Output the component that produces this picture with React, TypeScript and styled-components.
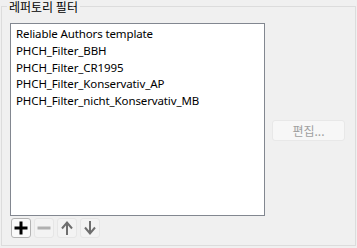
import styled, { createGlobalStyle } from 'styled-components';

const GlobalStyle = createGlobalStyle`
	html, body {
		margin: 0;
		padding: 0;
		background: #f0f0f0;
	}
	body {
		width: 357px;
		height: 248px;
		overflow: hidden;
		font-family: 'Noto Sans', 'Noto Sans CJK KR', sans-serif;
		font-size: 12px;
		color: #000;
	}
`;

const Page = styled.div`
	width: 357px;
	height: 248px;
	padding: 6px 1px 2px 1px;
	box-sizing: border-box;
`;

const GroupBox = styled.fieldset`
	margin: 0;
	padding: 6px 9px 7px 8px;
	height: 240px;
	box-sizing: border-box;
	border: 1px solid #dcdcdc;
	position: relative;
	display: flex;
	gap: 7px;
`;

const Legend = styled.span`
	position: absolute;
	top: -7px;
	left: 5px;
	padding: 0 2px;
	background: #f0f0f0;
	font-family: 'Noto Sans CJK KR', sans-serif;
	font-size: 12px;
	line-height: 13px;
	color: #000;
`;

const LeftColumn = styled.div`
	display: flex;
	flex-direction: column;
	padding-top: 10px;
	gap: 2px;
`;

const ListBox = styled.div`
	width: 255px;
	height: 193px;
	box-sizing: border-box;
	background: #fff;
	border: 1px solid #828790;
	padding: 2px 5px;
	display: flex;
	flex-direction: column;
`;

const ListItem = styled.div`
	height: 16.8px;
	line-height: 16.8px;
	font-size: 11.5px;
	white-space: nowrap;
	letter-spacing: -0.12px;
`;

const ToolRow = styled.div`
	display: flex;
	gap: 3px;
	padding-left: 1px;
`;

const ToolButton = styled.button<{ $active?: boolean }>`
	width: 20px;
	height: 20px;
	padding: 0;
	margin: 0;
	box-sizing: border-box;
	display: flex;
	align-items: center;
	justify-content: center;
	border-radius: 3px;
	border: 1px solid ${({ $active }) => ($active ? '#b4b4b4' : '#e6e6e6')};
	background: ${({ $active }) => ($active ? '#fafafa' : '#f3f3f3')};
	color: ${({ $active }) => ($active ? '#000' : '#6e6e6e')};
`;

const RightColumn = styled.div`
	display: flex;
	flex-direction: column;
	padding-top: 107px;
`;

const EditButton = styled.button`
	width: 73px;
	height: 21px;
	padding: 0;
	margin: 0;
	border-radius: 3px;
	border: 1px solid #e8e8e8;
	background: #f7f7f7;
	color: #a0a0a0;
	font-family: 'Noto Sans CJK KR', sans-serif;
	font-size: 12px;
	line-height: 19px;
`;

const items = [
	'Reliable Authors template',
	'PHCH_Filter_BBH',
	'PHCH_Filter_CR1995',
	'PHCH_Filter_Konservativ_AP',
	'PHCH_Filter_nicht_Konservativ_MB',
];

const PlusIcon = () => (
	<svg width="16" height="16" viewBox="0 0 16 16">
		<path d="M8 1.5v13M1.5 8h13" stroke="currentColor" strokeWidth="3" />
	</svg>
);

const MinusIcon = () => (
	<svg width="16" height="16" viewBox="0 0 16 16">
		<path d="M1.5 8h13" stroke="#b0b0b0" strokeWidth="3" />
	</svg>
);

const ArrowIcon = ({ down }: { down?: boolean }) => (
	<svg width="16" height="16" viewBox="0 0 16 16" style={down ? { transform: 'rotate(180deg)' } : undefined}>
		<path d="M8 3v12" stroke="currentColor" strokeWidth="2" />
		<path d="M3 8.5L8 2.5l5 6" stroke="currentColor" strokeWidth="2" fill="none" />
	</svg>
);

export default function App() {
	return (
		<>
			<GlobalStyle />
			<Page>
				<GroupBox>
					<Legend>레퍼토리 필터</Legend>
					<LeftColumn>
						<ListBox>
							{items.map((item) => (
								<ListItem key={item}>{item}</ListItem>
							))}
						</ListBox>
						<ToolRow>
							<ToolButton $active>
								<PlusIcon />
							</ToolButton>
							<ToolButton>
								<MinusIcon />
							</ToolButton>
							<ToolButton>
								<ArrowIcon />
							</ToolButton>
							<ToolButton>
								<ArrowIcon down />
							</ToolButton>
						</ToolRow>
					</LeftColumn>
					<RightColumn>
						<EditButton disabled>편집...</EditButton>
					</RightColumn>
				</GroupBox>
			</Page>
		</>
	);
}
